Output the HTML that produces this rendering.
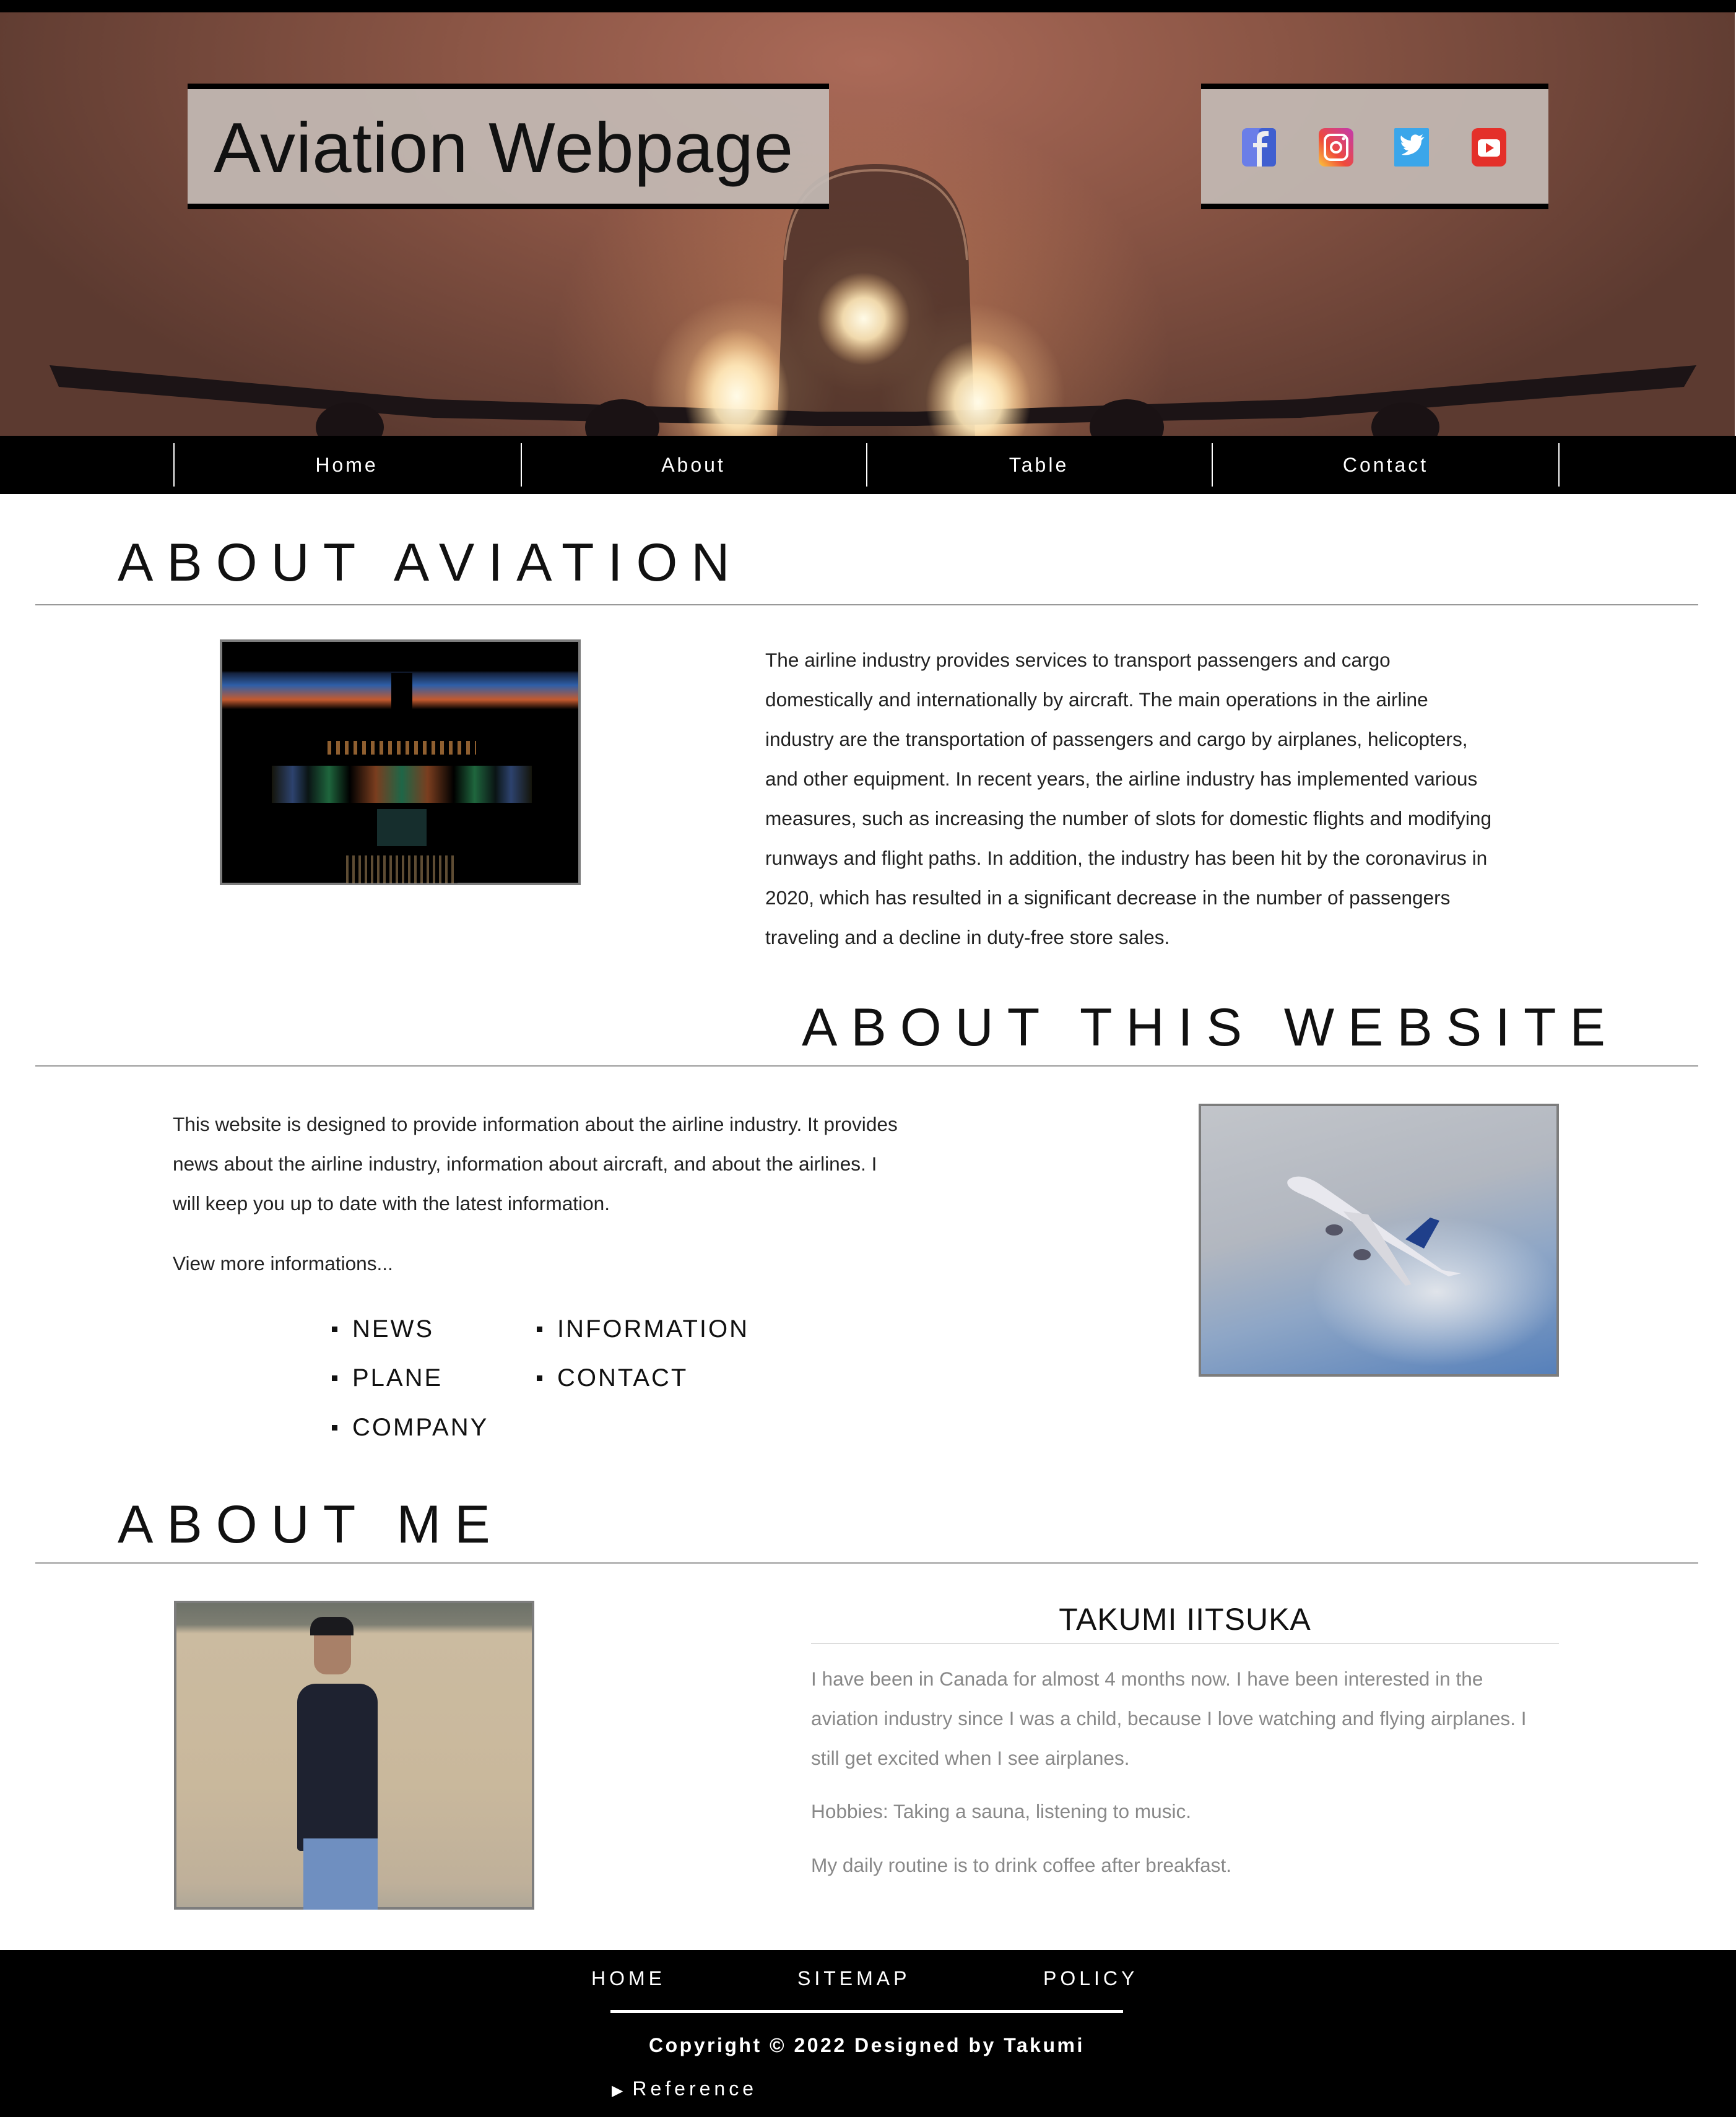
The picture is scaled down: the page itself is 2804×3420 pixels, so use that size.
<!DOCTYPE html>
<html><head><meta charset="utf-8">
<style>
*{margin:0;padding:0;box-sizing:border-box}
html,body{width:2804px;height:3420px;background:#fff;font-family:"Liberation Sans",sans-serif;overflow:hidden;position:relative}
.abs{position:absolute}
.hero{left:0;top:20px;width:2802px;height:684px;background:
radial-gradient(ellipse 120px 120px at 1395px 495px,rgba(255,240,210,.9) 0%,rgba(255,200,140,.5) 45%,rgba(255,190,120,0) 100%),
radial-gradient(ellipse 150px 150px at 1200px 610px,rgba(255,240,210,.9) 0%,rgba(247,196,138,.5) 45%,rgba(240,170,110,0) 100%),
radial-gradient(ellipse 150px 150px at 1570px 620px,rgba(255,240,210,.9) 0%,rgba(247,196,138,.5) 45%,rgba(240,170,110,0) 100%),
radial-gradient(ellipse 500px 420px at 1390px 560px,rgba(230,150,100,.5) 0%,rgba(200,120,80,0) 100%),
radial-gradient(ellipse 1500px 700px at 1400px 80px,#ab6a58 0%,#8a5545 45%,#5c3a30 100%);}
.top{left:0;top:0;width:2804px;height:20px;background:#000}
.nav{left:0;top:704px;width:2804px;height:94px;background:#000}
.sep{top:716px;width:2px;height:70px;background:#fff}
.nl{top:704px;height:94px;line-height:94px;color:#fff;font-size:32px;letter-spacing:4px;text-align:center;width:300px}
.box{background:rgba(195,185,180,.93);border-top:9px solid #000;border-bottom:9px solid #000}
.h{font-size:86px;letter-spacing:22px;color:#111;white-space:nowrap;line-height:1}
.hr{height:2px;background:#999;left:57px;width:2686px}
.p{font-size:31.6px;line-height:64px;color:#222;white-space:nowrap}
.g{color:#888}
.li{font-size:40px;letter-spacing:3px;color:#111;white-space:nowrap}
.li:before{content:"";position:absolute;left:-33px;top:18px;width:9px;height:9px;background:#111}
.img{border:4px solid #7d7d7d}
.f{color:#fff;font-size:32px;letter-spacing:6px;white-space:nowrap}
</style></head><body>
<div class="abs top"></div>
<div class="abs hero"></div>
<svg class="abs" style="left:0;top:20px" width="2804" height="684">
 <defs><radialGradient id="gl"><stop offset="0" stop-color="#fffbe8"/><stop offset=".45" stop-color="#ffe8b8" stop-opacity=".9"/><stop offset="1" stop-color="#ffcc88" stop-opacity="0"/></radialGradient></defs>
 <path d="M1265 420 C1265 290 1320 245 1415 245 C1510 245 1565 290 1565 420 L1575 684 L1255 684 Z" fill="#3a2622" opacity=".7"/>
 <path d="M1268 400 C1275 290 1330 255 1415 255 C1500 255 1555 290 1562 400" fill="none" stroke="#e0b090" stroke-width="4" opacity=".5"/>
 <path d="M80 570 L95 605 L700 655 L1320 668 L1480 668 L2100 655 L2720 605 L2740 570 L2100 625 L1480 645 L1320 645 L700 625 Z" fill="#1c1416"/>
 <ellipse cx="565" cy="670" rx="55" ry="40" fill="#1a1214"/>
 <ellipse cx="1005" cy="670" rx="60" ry="45" fill="#1a1214"/>
 <ellipse cx="1820" cy="670" rx="60" ry="45" fill="#1a1214"/>
 <ellipse cx="2270" cy="670" rx="55" ry="40" fill="#1a1214"/>
 <circle cx="1395" cy="495" r="75" fill="url(#gl)"/>
 <ellipse cx="1190" cy="620" rx="85" ry="110" fill="url(#gl)"/>
 <ellipse cx="1580" cy="630" rx="85" ry="100" fill="url(#gl)"/>
</svg>
<div class="abs box" style="left:303px;top:135px;width:1036px;height:203px"></div>
<div class="abs" style="left:345px;top:170px;font-size:114px;color:#111;line-height:140px;white-space:nowrap;letter-spacing:1px">Aviation Webpage</div>
<div class="abs box" style="left:1940px;top:135px;width:561px;height:203px"></div>
<svg class="abs" style="left:1940px;top:135px" width="561" height="203">
 <rect x="66" y="72" width="55" height="62" rx="8" fill="#6a7ee8"/><rect x="93" y="72" width="28" height="62" rx="6" fill="#3f5fd0"/>
 <path d="M98 134 V103 H107 V96 H98 V91 C98 86 101 85 106 85 H109 V77 H103 C93 77 90 82 90 90 V96 H84 V103 H90 V134 Z" fill="#eee"/>
 <defs><linearGradient id="ig" x1="0" y1="1" x2="1" y2="0"><stop offset="0" stop-color="#fcc83d"/><stop offset=".4" stop-color="#ef4a3a"/><stop offset="1" stop-color="#c23ab0"/></linearGradient></defs>
 <rect x="190" y="72" width="56" height="62" rx="10" fill="url(#ig)"/>
 <rect x="200" y="83" width="36" height="40" rx="9" fill="none" stroke="#fff" stroke-width="4"/>
 <circle cx="218" cy="103" r="8" fill="none" stroke="#fff" stroke-width="4"/><circle cx="230" cy="89" r="2.5" fill="#fff"/>
 <rect x="312" y="72" width="56" height="62" rx="2" fill="#3ba6ea"/>
 <path d="M324 115 C340 118 356 108 356 92 L361 86 L355 88 L358 82 L352 85 C346 79 337 84 339 92 C332 92 327 88 323 84 C321 90 324 94 327 96 L323 95 C324 100 328 103 331 103 L327 104 C329 107 332 108 335 108 C331 112 327 113 324 115 Z" fill="#fff"/>
 <rect x="437" y="72" width="56" height="62" rx="10" fill="#e4302a"/>
 <rect x="447" y="90" width="36" height="28" rx="6" fill="#fff"/><path d="M460 96 L473 104 L460 112 Z" fill="#e4302a"/>
</svg>
<div class="abs nav"></div>
<div class="abs sep" style="left:280px"></div><div class="abs sep" style="left:841px"></div><div class="abs sep" style="left:1399px"></div><div class="abs sep" style="left:1957px"></div><div class="abs sep" style="left:2517px"></div>
<div class="abs nl" style="left:410px">Home</div>
<div class="abs nl" style="left:970px">About</div>
<div class="abs nl" style="left:1528px">Table</div>
<div class="abs nl" style="left:2088px">Contact</div>

<div class="abs h" style="left:190px;top:866px">ABOUT AVIATION</div>
<div class="abs hr" style="top:976px"></div>
<div class="abs img" style="left:355px;top:1033px;width:583px;height:397px;background:
linear-gradient(180deg,#000 0%,#000 12%,#14223c 13%,#2f5fa8 18%,#c45a2e 24%,#000 28%,#000 100%)">
 <div class="abs" style="left:273px;top:50px;width:34px;height:90px;background:#000"></div>
 <div class="abs" style="left:80px;top:200px;width:420px;height:60px;background:linear-gradient(90deg,#221 0,#4b6fb8 8%,#122 14%,#3a6 22%,#000 30%,#c63 40%,#3a7 50%,#c63 60%,#000 70%,#3a6 78%,#122 86%,#4b6fb8 92%,#221 100%);opacity:.6"></div>
 <div class="abs" style="left:170px;top:160px;width:240px;height:22px;background:repeating-linear-gradient(90deg,#c84 0 6px,#000 6px 14px);opacity:.7"></div>
 <div class="abs" style="left:250px;top:270px;width:80px;height:60px;background:#1c3a38;opacity:.8"></div>
 <div class="abs" style="left:200px;top:345px;width:180px;height:45px;background:repeating-linear-gradient(90deg,#b96 0 4px,#000 4px 10px);opacity:.5"></div>
</div>
<div class="abs p" style="left:1236px;top:1034px">The airline industry provides services to transport passengers and cargo<br>domestically and internationally by aircraft. The main operations in the airline<br>industry are the transportation of passengers and cargo by airplanes, helicopters,<br>and other equipment. In recent years, the airline industry has implemented various<br>measures, such as increasing the number of slots for domestic flights and modifying<br>runways and flight paths. In addition, the industry has been hit by the coronavirus in<br>2020, which has resulted in a significant decrease in the number of passengers<br>traveling and a decline in duty-free store sales.</div>

<div class="abs h" style="left:1295px;top:1617px">ABOUT THIS WEBSITE</div>
<div class="abs hr" style="top:1721px"></div>
<div class="abs p" style="left:279px;top:1784px">This website is designed to provide information about the airline industry. It provides<br>news about the airline industry, information about aircraft, and about the airlines. I<br>will keep you up to date with the latest information.</div>
<div class="abs p" style="left:279px;top:2009px">View more informations...</div>
<div class="abs li" style="left:569px;top:2125px">NEWS</div>
<div class="abs li" style="left:569px;top:2204px">PLANE</div>
<div class="abs li" style="left:569px;top:2284px">COMPANY</div>
<div class="abs li" style="left:900px;top:2125px">INFORMATION</div>
<div class="abs li" style="left:900px;top:2204px">CONTACT</div>
<div class="abs img" style="left:1936px;top:1783px;width:582px;height:441px;background:
radial-gradient(ellipse 200px 120px at 380px 300px,#e0e4ea 0%,rgba(224,228,234,0) 100%),
linear-gradient(165deg,#c2c5ca 0%,#b2b7c0 40%,#8ea6c6 65%,#5680ba 100%)">
 <svg class="abs" style="left:0;top:0" width="574" height="433">
  <path d="M140 120 C150 110 170 112 190 125 L390 265 L420 270 L400 275 L380 265 L180 150 C155 140 135 132 140 120 Z" fill="#e8e8ee"/>
  <path d="M330 215 L370 180 L385 185 L360 230 Z" fill="#1f3f8a"/>
  <path d="M230 170 L330 290 L340 288 L270 175 Z" fill="#d8d8de"/>
  <ellipse cx="215" cy="200" rx="14" ry="9" fill="#556"/><ellipse cx="260" cy="240" rx="14" ry="9" fill="#556"/>
 </svg>
</div>

<div class="abs h" style="left:190px;top:2420px">ABOUT ME</div>
<div class="abs hr" style="top:2524px"></div>
<div class="abs img" style="left:281px;top:2586px;width:582px;height:499px;background:linear-gradient(180deg,#6d7168 0%,#7d7e72 7%,#cbbba0 10%,#c9b89c 60%,#bfb09a 92%,#b0a898 100%)">
 <div class="abs" style="left:195px;top:130px;width:130px;height:270px;background:#1e2230;border-radius:30px 30px 5px 5px"></div>
 <div class="abs" style="left:205px;top:380px;width:120px;height:115px;background:#6f8fc0"></div>
 <div class="abs" style="left:222px;top:30px;width:60px;height:85px;background:#a88068;border-radius:20px"></div>
 <div class="abs" style="left:216px;top:22px;width:70px;height:30px;background:#1a1a1e;border-radius:20px 20px 0 0"></div>
</div>
<div class="abs" style="left:1310px;top:2584px;width:1208px;text-align:center;font-size:50px;color:#111;line-height:64px;letter-spacing:1px">TAKUMI IITSUKA</div>
<div class="abs" style="left:1310px;top:2654px;width:1208px;height:2px;background:#ddd"></div>
<div class="abs p g" style="left:1310px;top:2680px">I have been in Canada for almost 4 months now. I have been interested in the<br>aviation industry since I was a child, because I love watching and flying airplanes. I<br>still get excited when I see airplanes.</div>
<div class="abs p g" style="left:1310px;top:2894px">Hobbies: Taking a sauna, listening to music.</div>
<div class="abs p g" style="left:1310px;top:2981px">My daily routine is to drink coffee after breakfast.</div>

<div class="abs" style="left:0;top:3150px;width:2804px;height:270px;background:#000"></div>
<div class="abs f" style="left:955px;top:3178px">HOME</div>
<div class="abs f" style="left:1288px;top:3178px">SITEMAP</div>
<div class="abs f" style="left:1685px;top:3178px">POLICY</div>
<div class="abs" style="left:986px;top:3247px;width:828px;height:5px;background:#fff"></div>
<div class="abs f" style="left:1048px;top:3286px;letter-spacing:3.5px;font-weight:bold">Copyright © 2022 Designed by Takumi</div>
<div class="abs f" style="left:988px;top:3356px;letter-spacing:6px"><span style="font-size:24px;letter-spacing:0">▶</span> Reference</div>
</body></html>
